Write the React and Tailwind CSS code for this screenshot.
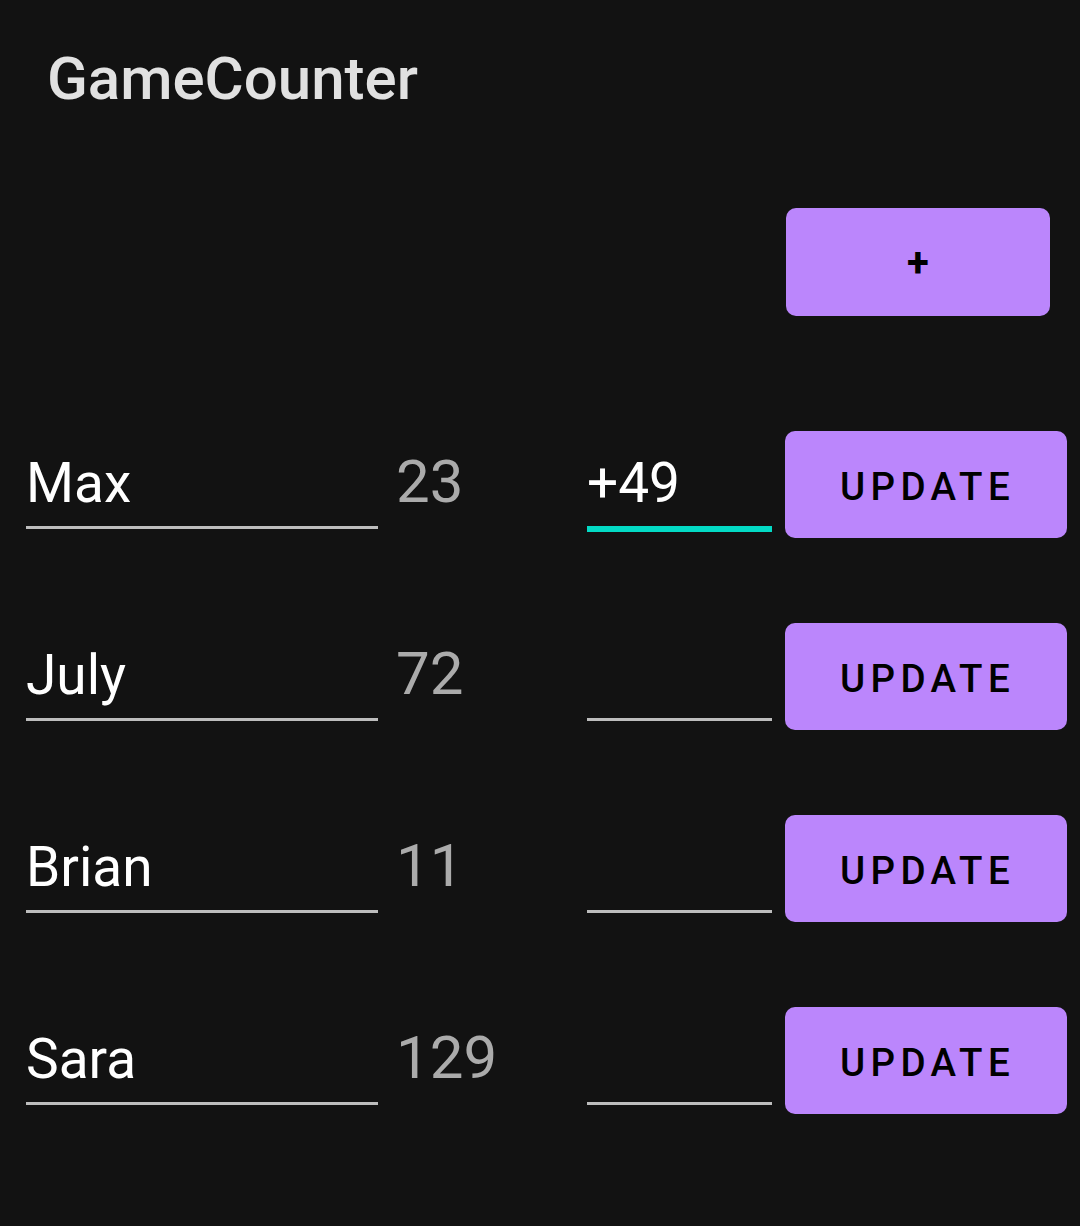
export default function App() {
  const rows = [
    { name: "Max", score: "23", input: "+49", active: true },
    { name: "July", score: "72", input: "", active: false },
    { name: "Brian", score: "11", input: "", active: false },
    { name: "Sara", score: "129", input: "", active: false },
  ];
  return (
    <div
      className="w-[1080px] h-[1226px] bg-[#121212] overflow-hidden"
      style={{ fontFamily: "Roboto, 'Noto Sans', sans-serif" }}
    >
      <div className="pl-[47px] pt-[49px] leading-[60px] text-[60px] font-medium text-[#e1e1e1]">
        GameCounter
      </div>
      <div className="flex justify-end pr-[30px] mt-[99px]">
        <button className="w-[264px] h-[108px] rounded-[10px] bg-[#bb86fc] text-black text-[40px] font-bold flex items-center justify-center pt-[2px]">
          +
        </button>
      </div>
      <div className="mt-[115px] flex flex-col gap-[85px]">
        {rows.map((r) => (
          <div key={r.name} className="flex items-start pl-[26px] h-[107px]">
            <div className="w-[352px] h-[98px] pt-[20px] border-b-[3px] border-[#bdbdbd] text-[55px] leading-[64px] text-white">
              {r.name}
            </div>
            <div className="ml-[18px] w-[191px] pt-[19px] text-[60px] leading-[64px] text-[#ababab]">
              {r.score}
            </div>
            {r.active ? (
              <div className="w-[185px] h-[101px] pt-[20px] border-b-[6px] border-[#03dac5] text-[55px] leading-[64px] text-white">
                {r.input}
              </div>
            ) : (
              <div className="w-[185px] h-[98px] border-b-[3px] border-[#bdbdbd]" />
            )}
            <button className="ml-[13px] w-[282px] h-[107px] rounded-[10px] bg-[#bb86fc] text-black text-[38.5px] font-medium tracking-[0.14em] flex items-center justify-center pl-[3px] pt-[4px]">
              UPDATE
            </button>
          </div>
        ))}
      </div>
    </div>
  );
}
